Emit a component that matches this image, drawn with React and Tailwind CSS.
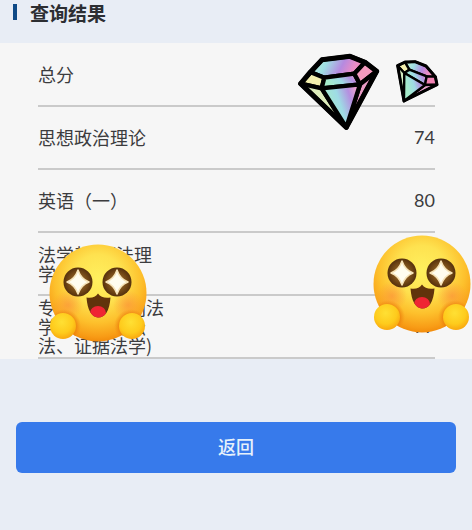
import React from "react";

const rows = [
  { label: "总分", value: "" },
  { label: "思想政治理论", value: "74" },
  { label: "英语（一）", value: "80" },
  { label: "法学基础(法理学、宪法学)", value: "" },
  { label: "专业基础（刑法学、刑事诉讼法、证据法学)", value: "77" },
];

function StarEyes({ className }) {
  return (
    <svg className={className} viewBox="0 0 98 98" aria-hidden="true">
      <defs>
        <radialGradient id="face" cx="0.5" cy="0.36" r="0.64">
          <stop offset="0" stopColor="#fff05e" />
          <stop offset="0.4" stopColor="#fee250" />
          <stop offset="0.7" stopColor="#fdc02c" />
          <stop offset="0.92" stopColor="#f89c16" />
          <stop offset="1" stopColor="#f28c0c" />
        </radialGradient>
        <radialGradient id="cheek">
          <stop offset="0" stopColor="#fb8a3c" stopOpacity="0.6" />
          <stop offset="1" stopColor="#fb8a3c" stopOpacity="0" />
        </radialGradient>
        <radialGradient id="shade">
          <stop offset="0.7" stopColor="#e87508" stopOpacity="0.65" />
          <stop offset="1" stopColor="#f08a10" stopOpacity="0" />
        </radialGradient>
        <radialGradient id="hand" cx="0.45" cy="0.35" r="0.65">
          <stop offset="0" stopColor="#ffe034" />
          <stop offset="0.65" stopColor="#fecb1c" />
          <stop offset="1" stopColor="#f9a80f" />
        </radialGradient>
        <radialGradient id="eye">
          <stop offset="0" stopColor="#b58a45" />
          <stop offset="0.6" stopColor="#7b4f1a" />
          <stop offset="1" stopColor="#55300c" />
        </radialGradient>
        <clipPath id="faceClip">
          <circle cx="49" cy="49" r="48.5" />
        </clipPath>
        <clipPath id="mouthClip">
          <path d="M37.5 53.5Q45 55 49 49.5Q53 55 61.5 53.5Q60 73.5 49 73.5Q39 72.5 37.5 53.5Z" />
        </clipPath>
      </defs>
      <circle cx="49" cy="49" r="48.5" fill="url(#face)" />
      <g clipPath="url(#faceClip)">
        <circle cx="19" cy="61" r="15" fill="url(#cheek)" />
        <circle cx="79" cy="61" r="15" fill="url(#cheek)" />
        <circle cx="15" cy="82" r="17" fill="url(#shade)" />
        <circle cx="82" cy="82" r="17" fill="url(#shade)" />
      </g>
      <circle cx="29" cy="38" r="14.5" fill="url(#eye)" />
      <circle cx="68" cy="38" r="14.5" fill="url(#eye)" />
      <path d="M29 26Q32 35 40 38Q32 41 29 50Q26 41 18 38Q26 35 29 26Z" fill="#fffdf0" stroke="#f6e3b8" strokeWidth="1.5" strokeLinejoin="round" />
      <path d="M68 26Q71 35 79 38Q71 41 68 50Q65 41 57 38Q65 35 68 26Z" fill="#fffdf0" stroke="#f6e3b8" strokeWidth="1.5" strokeLinejoin="round" />
      <path d="M37.5 53.5Q45 55 49 49.5Q53 55 61.5 53.5Q60 73.5 49 73.5Q39 72.5 37.5 53.5Z" fill="#61330b" />
      <ellipse cx="49" cy="69" rx="8" ry="7" fill="#ef2433" clipPath="url(#mouthClip)" />
      <circle cx="14" cy="82" r="13" fill="url(#hand)" />
      <circle cx="83" cy="82" r="13" fill="url(#hand)" />
    </svg>
  );
}

function LargeGem({ className }) {
  return (
    <svg className={className} viewBox="24 24 246 234" aria-hidden="true">
      <defs>
        <linearGradient id="gemTop" x1="0" y1="0.3" x2="1" y2="0.5">
          <stop offset="0" stopColor="#c3efd2" />
          <stop offset="0.28" stopColor="#9edfe4" />
          <stop offset="0.58" stopColor="#b58ae0" />
          <stop offset="0.8" stopColor="#e98cc6" />
          <stop offset="1" stopColor="#f391b7" />
        </linearGradient>
        <linearGradient id="gemBody" x1="0.1" y1="0.4" x2="0.9" y2="0.1">
          <stop offset="0" stopColor="#a6ebcb" />
          <stop offset="0.4" stopColor="#9edbe5" />
          <stop offset="0.75" stopColor="#b58fe0" />
          <stop offset="1" stopColor="#eda0ce" />
        </linearGradient>
      </defs>
      <g stroke="#000" strokeWidth="13" strokeLinejoin="round">
        <path d="M96 44L180 34L225 52L193 86L103 98L62 82Z" fill="url(#gemTop)" />
        <path d="M32 116L62 82L103 98L95 130Z" fill="#f3efad" />
        <path d="M103 98L193 86L210 118L95 130Z" fill="url(#gemBody)" />
        <path d="M193 86L225 52L260 79L210 118Z" fill="#f49abe" />
        <path d="M32 116L95 130L169 247Z" fill="#ddecbb" />
        <path d="M210 118L260 79L169 247Z" fill="#e99bc5" />
        <path d="M95 130L210 118L169 247Z" fill="url(#gemBody)" />
      </g>
      <path d="M96 44L180 34L225 52L260 79L169 247L32 116L62 80Z" fill="none" stroke="#000" strokeWidth="15" strokeLinejoin="round" />
    </svg>
  );
}

function SmallGem({ className }) {
  return (
    <svg className={className} viewBox="315 42 132 132" aria-hidden="true">
      <g stroke="#000" strokeWidth="7" strokeLinejoin="round">
        <path d="M345 52L375 50L408 63L436 95L410 94L358 74Z" fill="url(#gemTop)" />
        <path d="M323 62L345 52L358 74L343 84Z" fill="#f3efad" />
        <path d="M358 74L410 94L405 120L343 84Z" fill="url(#gemBody)" />
        <path d="M410 94L436 95L441 119L405 120Z" fill="#f283b4" />
        <path d="M323 62L343 84L342 168Z" fill="#d5edc2" />
        <path d="M405 120L441 119L342 168Z" fill="#e6a1ca" />
        <path d="M343 84L405 120L342 168Z" fill="url(#gemBody)" />
      </g>
      <path d="M323 62L345 51L375 50L408 63L436 95L441 119L342 168Z" fill="none" stroke="#000" strokeWidth="9" strokeLinejoin="round" />
    </svg>
  );
}

export default function App() {
  return (
    <main className="flex min-h-screen flex-col bg-[#e8edf5] font-['Noto_Sans_CJK_SC',sans-serif] text-lg text-[#3c3c3e]">
      <header className="flex h-[43px] items-start gap-[13px] px-[13px]">
        <span className="mt-1 h-4 w-1 bg-[#0f4a86]" />
        <h1 className="text-[19px] leading-[26px] font-bold text-[#2c2e32]">查询结果</h1>
      </header>

      <section className="relative bg-[#f6f6f6] pr-[37px] pl-[38px]">
        <table className="w-full border-collapse">
          <tbody>
            {rows.map((row) => (
              <tr key={row.label} className="h-[63px] border-b-2 border-[#cacaca]">
                <th scope="row" className="p-0 text-left align-middle font-normal">
                  <div className="w-[130px] leading-[19px]">{row.label}</div>
                </th>
                <td className="p-0 text-right align-middle font-[Lato,sans-serif] leading-[19px]">{row.value}</td>
              </tr>
            ))}
          </tbody>
        </table>

        <LargeGem className="absolute top-[10px] right-[92px] w-[82px]" />
        <SmallGem className="absolute top-4 right-[33px] w-11" />
        <StarEyes className="absolute top-[201px] left-[49px] w-[98px]" />
        <StarEyes className="absolute top-48 right-px w-[98px]" />
      </section>

      <footer className="flex px-4 pt-[63px] pb-14">
        <button type="button" className="h-[51px] flex-1 rounded-md bg-[#377aeb] pb-1 font-medium text-[#e6f1fb]">
          返回
        </button>
      </footer>
    </main>
  );
}
